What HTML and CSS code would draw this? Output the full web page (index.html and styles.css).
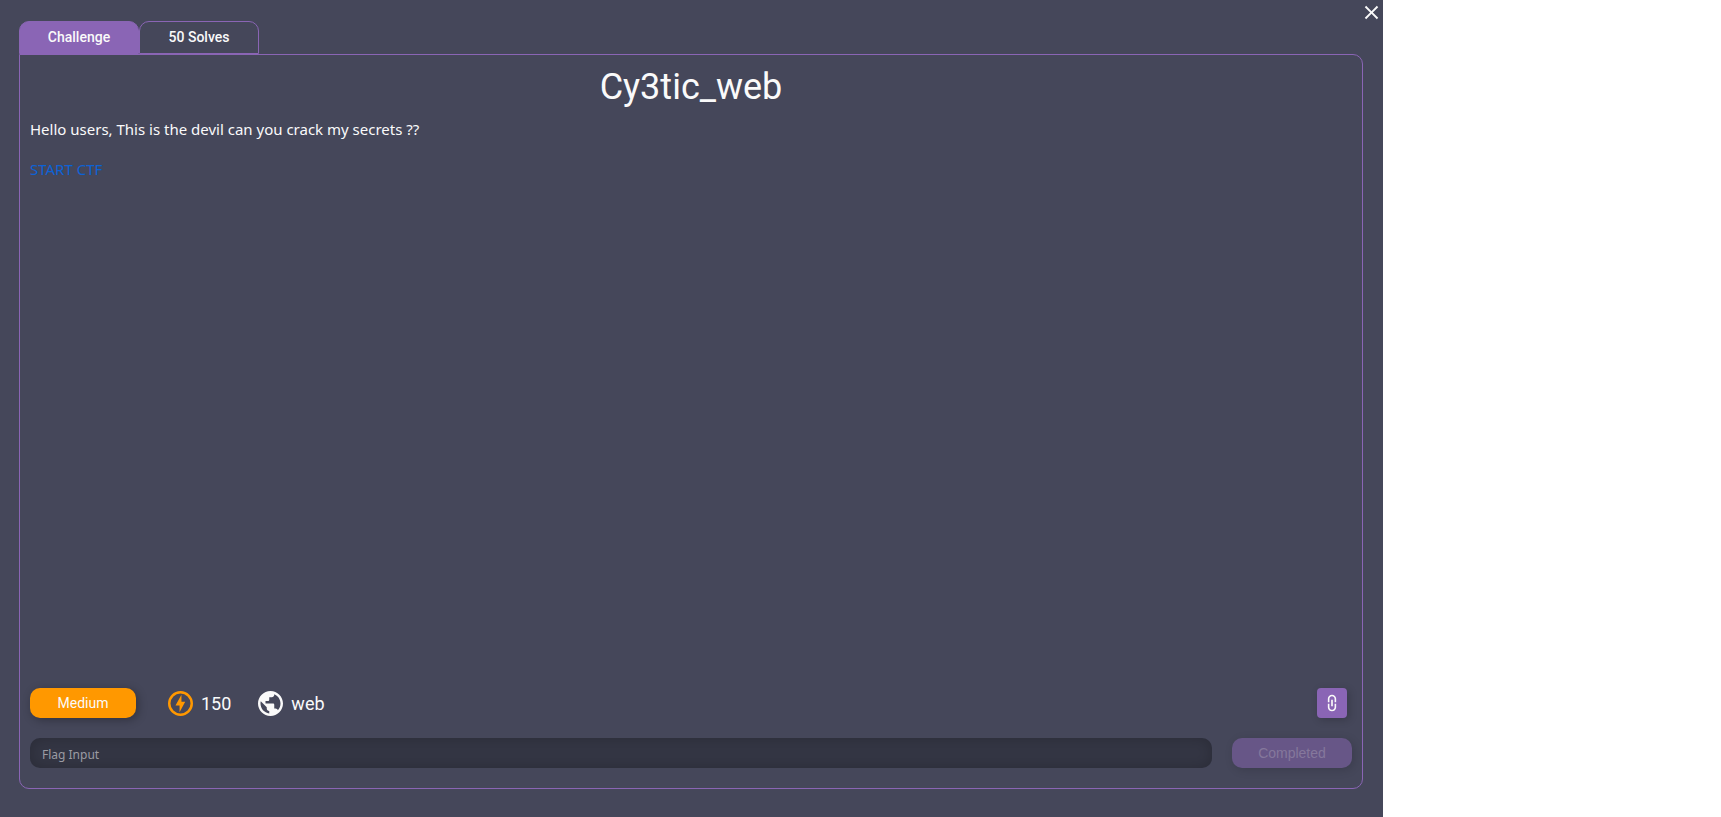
FILE: index.html
```html
<!DOCTYPE html>
<html lang="en">
<head>
<meta charset="utf-8">
<title>Cy3tic_web</title>
<link rel="stylesheet" href="styles.css">
</head>
<body>
<main class="modal">
  <button class="close" type="button" aria-label="Close">
    <svg class="close-icon" viewBox="0 0 24 24"><path d="M19 6.41 17.59 5 12 10.59 6.41 5 5 6.41 10.59 12 5 17.59 6.41 19 12 13.41 17.59 19 19 17.59 13.41 12z"/></svg>
  </button>
  <div class="tabs" role="tablist">
    <button class="tab tab-active" type="button" role="tab" aria-selected="true">Challenge</button>
    <button class="tab" type="button" role="tab" aria-selected="false">50 Solves</button>
  </div>
  <section class="panel">
    <h1 class="title">Cy3tic_web</h1>
    <div class="description">
      <p class="line">Hello users, This is the devil can you crack my secrets ??</p>
      <p class="line"><a class="start" href="#start">START CTF</a></p>
    </div>
    <div class="meta">
      <span class="difficulty">Medium</span>
      <span class="stat">
        <svg class="stat-icon bolt" viewBox="2 2 20 20"><circle cx="12" cy="12" r="9" fill="none" stroke="currentColor" stroke-width="2"/><path d="M12.75 5 8 13.5h3.25V19l4.5-8.5h-3z"/></svg>
        150
      </span>
      <span class="stat">
        <svg class="stat-icon" viewBox="2 2 20 20"><path d="M12 2C6.48 2 2 6.48 2 12s4.48 10 10 10 10-4.48 10-10S17.52 2 12 2zm-1 17.93c-3.95-.49-7-3.85-7-7.93 0-.62.08-1.21.21-1.79L9 15v1c0 1.1.9 2 2 2v1.93zm6.9-2.54c-.26-.81-1-1.39-1.9-1.39h-1v-3c0-.55-.45-1-1-1H8v-2h2c.55 0 1-.45 1-1V7h2c1.1 0 2-.9 2-2v-.41c2.93 1.19 5 4.06 5 7.41 0 2.08-.8 3.97-2.1 5.39z"/></svg>
        web
      </span>
      <button class="link-button" type="button" aria-label="Copy link">
        <svg class="link-icon" viewBox="0 0 24 24"><path transform="rotate(90 12 12)" d="M3.9 12c0-1.71 1.39-3.1 3.1-3.1h4V7H7c-2.76 0-5 2.24-5 5s2.24 5 5 5h4v-1.900H7c-1.71 0-3.1-1.39-3.1-3.1zM8 13h8v-2H8v2zm9-6h-4v1.900h4c1.71 0 3.1 1.39 3.1 3.1s-1.39 3.1-3.1 3.1h-4V17h4c2.76 0 5-2.240 5-5s-2.240-5-5-5z"/></svg>
      </button>
    </div>
    <form class="flag-form">
      <input class="flag" type="text" placeholder="Flag Input" aria-label="Flag Input">
      <button class="submit" type="submit" disabled>Completed</button>
    </form>
  </section>
</main>
</body>
</html>
```
FILE: styles.css
```css
* {
  box-sizing: border-box;
}

body {
  margin: 0;
  background: #fff;
  font-family: Roboto, sans-serif;
  color: #fafafa;
}

button,
input {
  border: 0;
  padding: 0;
  font: inherit;
  color: inherit;
}

svg {
  display: block;
  fill: currentColor;
}

.modal {
  position: relative;
  display: flex;
  flex-direction: column;
  width: 80.36%;
  min-height: 100vh;
  padding: 21px 20px 28px 19px;
  background: #45475a;
}

.close {
  position: absolute;
  top: 1px;
  right: 0;
  background: none;
}

.close-icon {
  width: 23px;
  height: 23px;
}

.tabs {
  display: flex;
}

.tab {
  width: 120px;
  height: 33px;
  padding-bottom: 2px;
  border: 1px solid #8a65b5;
  border-radius: 10px 10px 0 0;
  background: none;
  font-size: 14px;
  font-weight: 500;
}

.tab-active {
  background: #8a65b5;
}

.panel {
  flex: 1;
  display: flex;
  flex-direction: column;
  padding: 11px 10px 20px;
  border: 1px solid #8a65b5;
  border-radius: 0 10px 10px 10px;
}

.title {
  margin: 0;
  font-size: 36px;
  line-height: 42px;
  font-weight: 400;
  text-align: center;
}

.description {
  flex: 1;
  padding-top: 11px;
  font-family: "Segoe UI", "Noto Sans", sans-serif;
  font-size: 15px;
  line-height: 20px;
}

.line {
  margin: 0 0 20px;
}

.start {
  color: #0d62d6;
  text-decoration: none;
}

.meta {
  display: flex;
  align-items: center;
  height: 30px;
  margin-bottom: 20px;
}

.difficulty {
  width: 106px;
  margin-right: 32px;
  border-radius: 10px;
  background: #ff9800;
  box-shadow: 2px 2px 10px rgba(0, 0, 0, 0.3);
  font-size: 14px;
  line-height: 30px;
  text-align: center;
}

.stat {
  display: flex;
  align-items: center;
  gap: 8px;
  margin-right: 27px;
  font-size: 18px;
}

.stat-icon {
  width: 25px;
  height: 25px;
}

.bolt {
  color: #ff9800;
}

.link-button {
  display: grid;
  place-items: center;
  width: 30px;
  height: 30px;
  margin: 0 5px 0 auto;
  border-radius: 4px;
  background: #8a65b5;
  box-shadow: 2px 2px 8px rgba(0, 0, 0, 0.2);
}

.link-icon {
  width: 20px;
  height: 20px;
}

.flag-form {
  display: flex;
  gap: 20px;
}

.flag {
  flex: 1;
  height: 30px;
  padding: 2px 12px 0;
  border-radius: 10px;
  background: #343644;
  box-shadow: inset 0 0 15px rgba(0, 0, 0, 0.2);
  font-family: "Segoe UI", "Noto Sans", sans-serif;
  font-size: 12px;
}

.flag::placeholder {
  color: #9b9ca3;
}

.submit {
  width: 120px;
  height: 30px;
  border-radius: 10px;
  background: #675687;
  box-shadow: 2px 2px 10px rgba(0, 0, 0, 0.15);
  font-family: "Liberation Sans", Arial, sans-serif;
  font-size: 14px;
  color: #85789c;
}
```
